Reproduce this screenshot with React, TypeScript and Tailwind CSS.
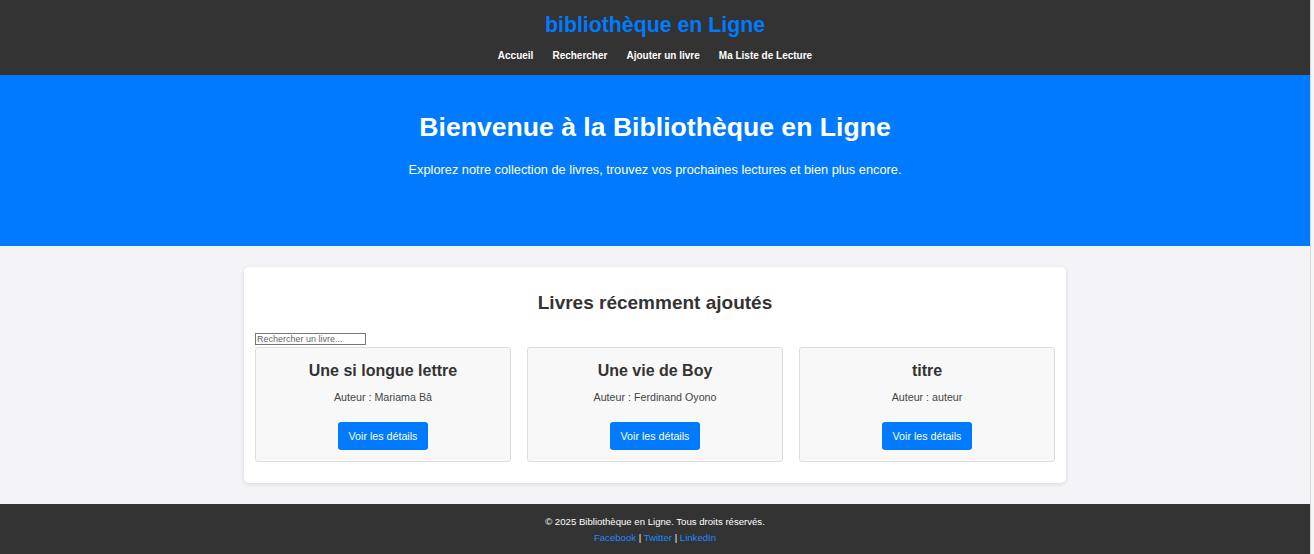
import React from 'react';

const books = [
  { title: 'Une si longue lettre', author: 'Mariama Bâ' },
  { title: 'Une vie de Boy', author: 'Ferdinand Oyono' },
  { title: 'titre', author: 'auteur' },
];

export default function App() {
  return (
    <div className="flex w-[1314px] h-[554px] overflow-hidden bg-[#f1f1f3] font-['Liberation_Sans',Arial,sans-serif]">
      <div className="w-[1310px] flex flex-col">
        {/* en-tête */}
        <header className="bg-[#333333] h-[75px] flex flex-col items-center pt-[12px]">
          <h1 className="text-[21.3px] leading-[26px] font-bold text-[#007bff]">bibliothèque en Ligne</h1>
          <nav className="flex gap-[19px] mt-[12px] text-[10px] leading-[12px] font-bold text-white">
            <a>Accueil</a>
            <a>Rechercher</a>
            <a>Ajouter un livre</a>
            <a>Ma Liste de Lecture</a>
          </nav>
        </header>

        {/* bannière */}
        <section className="bg-[#007bff] h-[171px] flex flex-col items-center pt-[36px] text-white">
          <h2 className="text-[26.6px] leading-[32px] font-bold">Bienvenue à la Bibliothèque en Ligne</h2>
          <p className="text-[12.8px] leading-[15px] mt-[19px]">
            Explorez notre collection de livres, trouvez vos prochaines lectures et bien plus encore.
          </p>
        </section>

        {/* contenu */}
        <main className="bg-[#f4f4f8] h-[258px] pt-[21px]">
          <div className="w-[822px] mx-auto bg-white rounded-[5px] shadow-[0_1px_4px_rgba(0,0,0,0.12)] px-[11px] pt-[24px] pb-[21px]">
            <h3 className="text-center text-[19px] leading-[24px] font-bold text-[#333333]">Livres récemment ajoutés</h3>
            <input
              type="text"
              placeholder="Rechercher un livre..."
              className="block mt-[18px] w-[111px] h-[12px] border border-[#767676] text-[9px] leading-[10px] px-[1px] placeholder:text-[#666666] outline-none"
            />
            <div className="flex gap-[16px] mt-[2px]">
              {books.map((b) => (
                <div
                  key={b.title}
                  className="flex-1 h-[115px] bg-[#f8f8f9] border border-[#dddddd] rounded-[3px] flex flex-col items-center pt-[13px]"
                >
                  <h4 className="text-[16px] leading-[19px] font-bold text-[#333333]">{b.title}</h4>
                  <p className="text-[10.7px] leading-[13px] mt-[11px] text-[#444444]">Auteur : {b.author}</p>
                  <button className="mt-[18px] h-[28px] px-[11px] bg-[#007bff] text-white text-[10.7px] rounded-[3px]">
                    Voir les détails
                  </button>
                </div>
              ))}
            </div>
          </div>
        </main>

        {/* pied de page */}
        <footer className="bg-[#333333] h-[50px] flex flex-col items-center pt-[10px] text-[9.6px] leading-[16px] text-white">
          <p>© 2025 Bibliothèque en Ligne. Tous droits réservés.</p>
          <p>
            <a className="text-[#1a8cff]">Facebook</a> | <a className="text-[#1a8cff]">Twitter</a> |{' '}
            <a className="text-[#1a8cff]">LinkedIn</a>
          </p>
        </footer>
      </div>
      <div className="w-[4px] border-l border-[#d8d8d8] bg-[#f5f5f5]" />
    </div>
  );
}
